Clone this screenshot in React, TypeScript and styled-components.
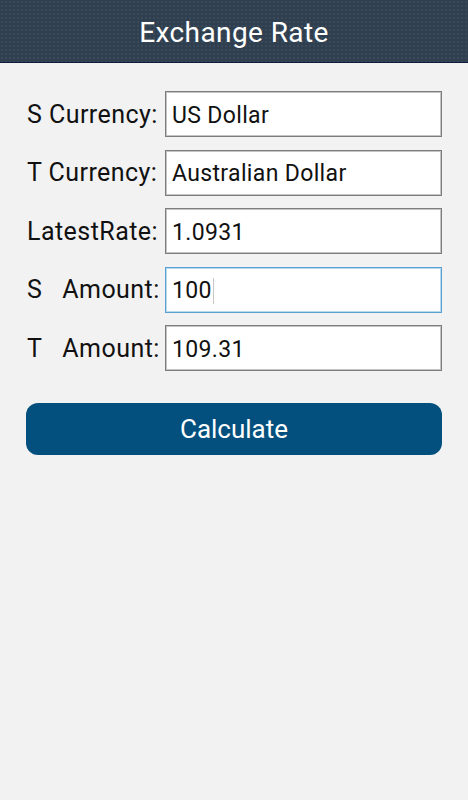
import React from 'react';
import styled, { createGlobalStyle } from 'styled-components';

const GlobalStyle = createGlobalStyle`
  html, body {
    margin: 0;
    padding: 0;
    background: #f2f2f2;
  }
  body {
    font-family: Roboto, 'Liberation Sans', sans-serif;
  }
`;

const fields = [
  { label: 'S Currency:', value: 'US Dollar' },
  { label: 'T Currency:', value: 'Australian Dollar' },
  { label: 'LatestRate:', value: '1.0931' },
  { label: 'S\u00a0\u00a0\u00a0Amount:', value: '100', focused: true },
  { label: 'T\u00a0\u00a0\u00a0Amount:', value: '109.31' },
];

const App: React.FC = () => {
  return (
    <>
      <GlobalStyle />
      <Screen>
        <Header>
          <Title>Exchange Rate</Title>
        </Header>
        <Form>
          {fields.map((f) => (
            <Row key={f.label}>
              <Label>{f.label}</Label>
              <Field focused={!!f.focused}>
                {f.value}
                {f.focused && <Caret />}
              </Field>
            </Row>
          ))}
          <Button>Calculate</Button>
        </Form>
      </Screen>
    </>
  );
};

export default App;

const Screen = styled.div`
  width: 468px;
  height: 800px;
  background: #f2f2f2;
  overflow: hidden;
`;

const Header = styled.div`
  height: 63px;
  box-sizing: border-box;
  padding-top: 3px;
  display: flex;
  align-items: center;
  justify-content: center;
  background-color: #2f3f50;
  background-image: radial-gradient(#394a5b 1px, transparent 1.2px);
  background-size: 4px 4px;
  border-bottom: 1px solid #0b1a3a;
`;

const Title = styled.div`
  color: #ffffff;
  font-size: 28px;
  letter-spacing: 0.4px;
`;

const Form = styled.div`
  display: flex;
  flex-direction: column;
  gap: 12.5px;
  padding: 28px 26px 0 27px;
`;

const Row = styled.div`
  display: flex;
  align-items: center;
  gap: 5px;
`;

const Label = styled.div`
  width: 133px;
  font-size: 25px;
  letter-spacing: 0.45px;
  color: #111;
  white-space: nowrap;
`;

const Field = styled.div<{ focused: boolean }>`
  flex: 1;
  height: 46px;
  box-sizing: border-box;
  display: flex;
  align-items: center;
  padding-left: 6px;
  padding-top: 2px;
  background: #fff;
  border: 1px solid ${(p) => (p.focused ? '#5aa0d0' : '#7d7d7d')};
  box-shadow: inset 0 0 0 1px ${(p) => (p.focused ? '#b8daf0' : '#c4c4c4')};
  font-size: 23px;
  letter-spacing: 0.35px;
  color: #111;
`;

const Caret = styled.span`
  display: inline-block;
  width: 1px;
  height: 26px;
  margin-left: 1px;
  background: #c8c8c8;
`;

const Button = styled.div`
  margin-top: 19px;
  margin-left: -1px;
  height: 52px;
  border-radius: 12px;
  background: #03507e;
  color: #fff;
  font-size: 26px;
  display: flex;
  align-items: center;
  justify-content: center;
`;
